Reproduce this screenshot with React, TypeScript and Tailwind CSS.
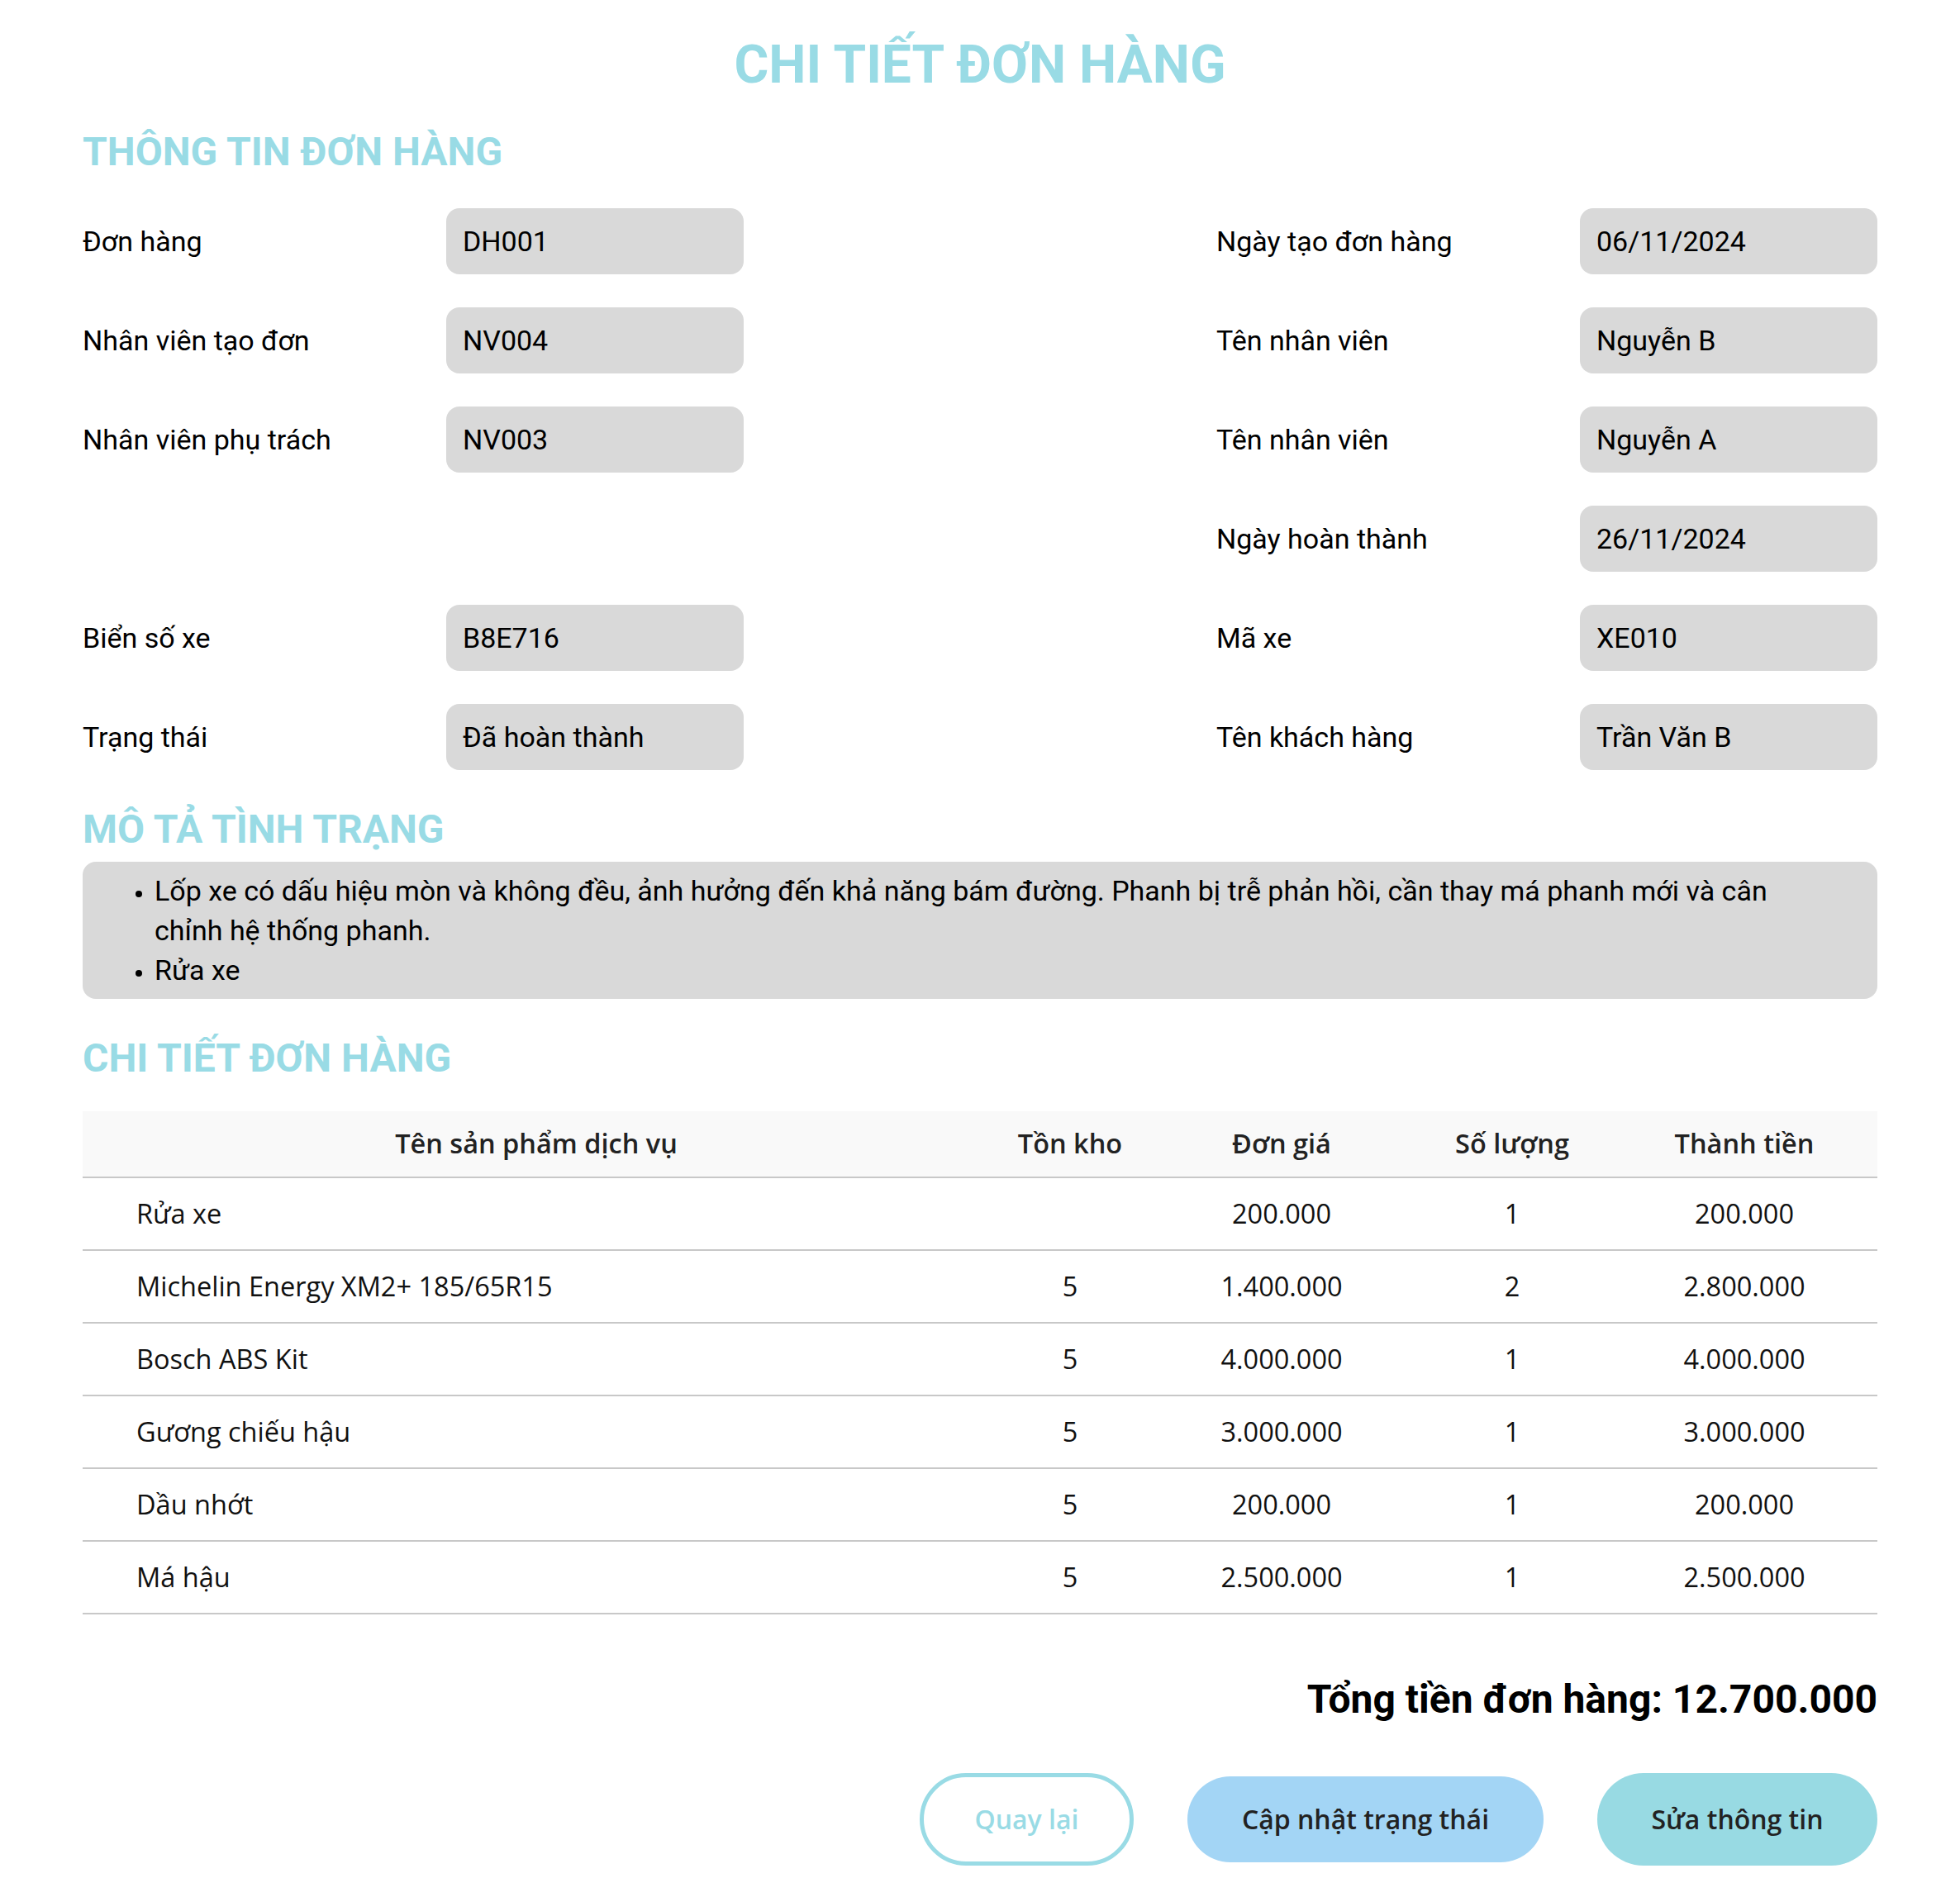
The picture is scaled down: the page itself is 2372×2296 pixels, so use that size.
import React from 'react';

type Field = { label: string; value: string } | null;

const rows: [Field, Field][] = [
  [{ label: 'Đơn hàng', value: 'DH001' }, { label: 'Ngày tạo đơn hàng', value: '06/11/2024' }],
  [{ label: 'Nhân viên tạo đơn', value: 'NV004' }, { label: 'Tên nhân viên', value: 'Nguyễn B' }],
  [{ label: 'Nhân viên phụ trách', value: 'NV003' }, { label: 'Tên nhân viên', value: 'Nguyễn A' }],
  [null, { label: 'Ngày hoàn thành', value: '26/11/2024' }],
  [{ label: 'Biển số xe', value: 'B8E716' }, { label: 'Mã xe', value: 'XE010' }],
  [{ label: 'Trạng thái', value: 'Đã hoàn thành' }, { label: 'Tên khách hàng', value: 'Trần Văn B' }],
];

const items = [
  { name: 'Rửa xe', stock: '', price: '200.000', qty: '1', total: '200.000' },
  { name: 'Michelin Energy XM2+ 185/65R15', stock: '5', price: '1.400.000', qty: '2', total: '2.800.000' },
  { name: 'Bosch ABS Kit', stock: '5', price: '4.000.000', qty: '1', total: '4.000.000' },
  { name: 'Gương chiếu hậu', stock: '5', price: '3.000.000', qty: '1', total: '3.000.000' },
  { name: 'Dầu nhớt', stock: '5', price: '200.000', qty: '1', total: '200.000' },
  { name: 'Má hậu', stock: '5', price: '2.500.000', qty: '1', total: '2.500.000' },
];

function FieldCell({ field }: { field: Field }) {
  if (!field) return <div />;
  return (
    <div className="flex items-center">
      <div className="w-[440px] text-[34px] text-black">{field.label}</div>
      <div className="w-[360px] h-[80px] rounded-2xl bg-[#d9d9d9] flex items-center px-[20px] text-[34px] text-black">
        {field.value}
      </div>
    </div>
  );
}

function SectionTitle({ children, className }: { children: React.ReactNode; className: string }) {
  return (
    <h2 className={`text-[48px] font-bold leading-none text-[#99dbe5] ${className}`}>{children}</h2>
  );
}

export default function App() {
  return (
    <div className="min-h-screen bg-white px-[100px] pt-[47px] pb-[40px] font-['Roboto',sans-serif]">
      <h1 className="text-center text-[64px] font-bold leading-none text-[#99dbe5]">
        CHI TIẾT ĐƠN HÀNG
      </h1>

      <SectionTitle className="mt-[49px]">THÔNG TIN ĐƠN HÀNG</SectionTitle>

      <div className="mt-[44px] grid grid-cols-[800px_800px] justify-between gap-y-[40px]">
        {rows.map(([l, r], i) => (
          <React.Fragment key={i}>
            <FieldCell field={l} />
            <FieldCell field={r} />
          </React.Fragment>
        ))}
      </div>

      <SectionTitle className="mt-[48px]">MÔ TẢ TÌNH TRẠNG</SectionTitle>
      <div className="mt-[15px] rounded-2xl bg-[#d9d9d9] py-[11px] pl-[87px] pr-[80px]">
        <ul className="list-disc text-[34px] leading-[48px] text-black marker:text-[26px]">
          <li>
            Lốp xe có dấu hiệu mòn và không đều, ảnh hưởng đến khả năng bám đường. Phanh bị trễ phản hồi, cần thay má phanh mới và cân chỉnh hệ thống phanh.
          </li>
          <li>Rửa xe</li>
        </ul>
      </div>

      <SectionTitle className="mt-[48px]">CHI TIẾT ĐƠN HÀNG</SectionTitle>

      <table className="mt-[40px] w-full table-fixed border-collapse font-['Open_Sans',sans-serif] text-[32.5px]">
        <colgroup>
          <col className="w-[1098px]" />
          <col className="w-[194px]" />
          <col className="w-[318px]" />
          <col className="w-[240px]" />
          <col className="w-[322px]" />
        </colgroup>
        <thead>
          <tr className="h-[80px] bg-[#f9f9f9] border-b-2 border-[#c8c8c8] text-[#222]">
            <th className="font-semibold text-center">Tên sản phẩm dịch vụ</th>
            <th className="font-semibold text-center">Tồn kho</th>
            <th className="font-semibold text-center">Đơn giá</th>
            <th className="font-semibold text-center">Số lượng</th>
            <th className="font-semibold text-center">Thành tiền</th>
          </tr>
        </thead>
        <tbody>
          {items.map((it) => (
            <tr key={it.name} className="h-[88px] border-b-2 border-[#c8c8c8] text-[#111]">
              <td className="pl-[65px] text-left">{it.name}</td>
              <td className="text-center">{it.stock}</td>
              <td className="text-center">{it.price}</td>
              <td className="text-center">{it.qty}</td>
              <td className="text-center">{it.total}</td>
            </tr>
          ))}
        </tbody>
      </table>

      <div className="mt-[79px] text-right text-[48px] font-bold leading-none text-black">
        Tổng tiền đơn hàng: 12.700.000
      </div>

      <div className="mt-[65px] flex items-center justify-end gap-[65px] font-['Open_Sans',sans-serif] text-[32px] font-semibold">
        <button
          type="button"
          className="w-[259px] h-[112px] rounded-full border-[5px] border-[#99dbe5] bg-white text-[#99dbe5]"
        >
          Quay lại
        </button>
        <button
          type="button"
          className="w-[431px] h-[104px] rounded-full bg-[#a3d5f5] text-[#222]"
        >
          Cập nhật trạng thái
        </button>
        <button
          type="button"
          className="w-[339px] h-[112px] rounded-full bg-[#98dae3] text-[#222]"
        >
          Sửa thông tin
        </button>
      </div>
    </div>
  );
}
